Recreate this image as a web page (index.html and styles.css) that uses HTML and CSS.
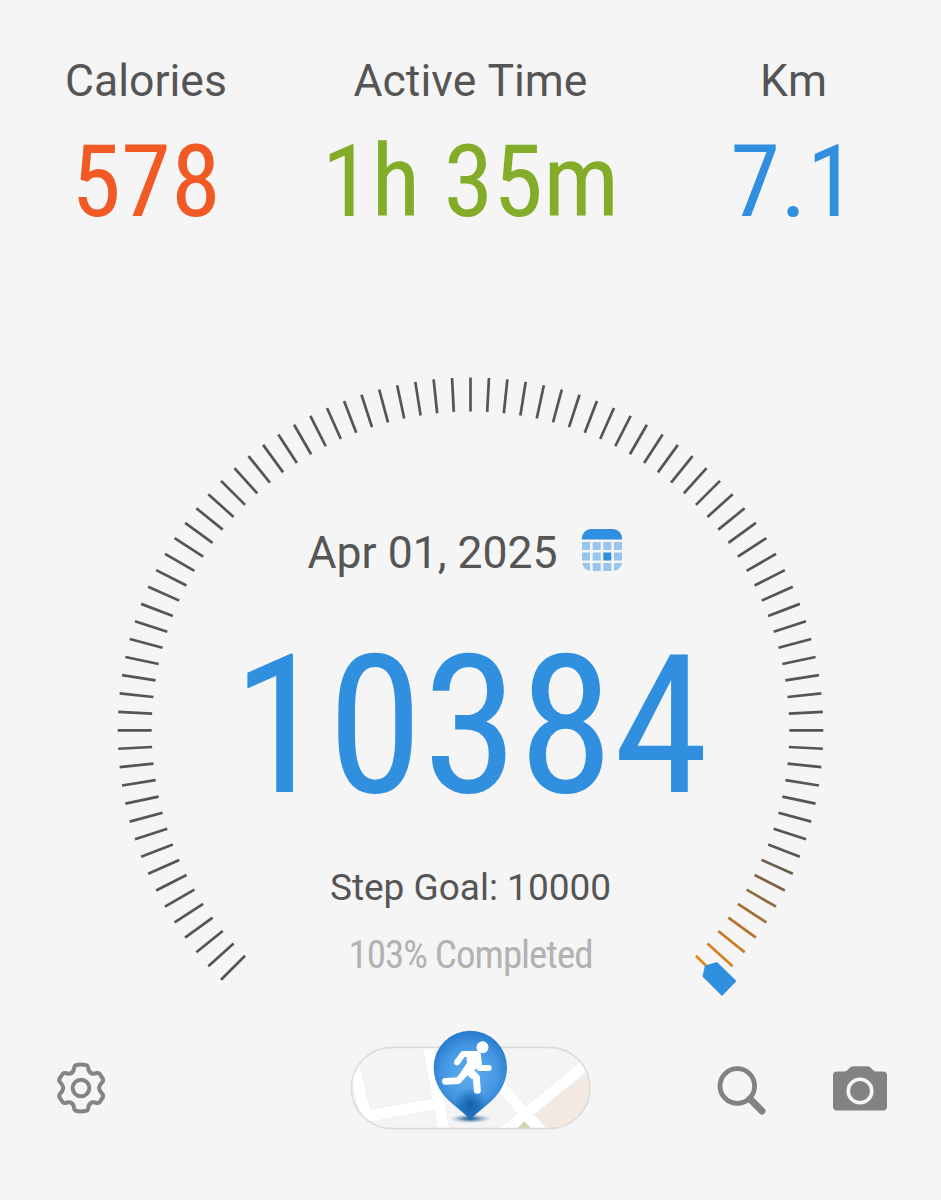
FILE: index.html
```html
<!doctype html>
<html lang="en">

<head>
    <meta charset="utf-8" />
    <meta name="viewport" content="width=device-width, initial-scale=1">
    <title>Pedometer</title>
    <link rel="stylesheet" href="styles.css">
</head>

<body>
    <header class="stats">
        <div class="stat">
            <div class="stat-label">Calories</div>
            <div class="stat-value calories">578</div>
        </div>
        <div class="stat">
            <div class="stat-label">Active Time</div>
            <div class="stat-value time">1h 35m</div>
        </div>
        <div class="stat">
            <div class="stat-label">Km</div>
            <div class="stat-value distance">7.1</div>
        </div>
    </header>

    <main class="gauge">
        <svg class="dial" viewBox="0 0 741 650" aria-hidden="true">
            <g id="ticks"></g>
            <path class="pointer" d="M602.5 616.5 L605 605.5 L617 602 L636.5 621 L622 636 Z" />
        </svg>
        <div class="readout">
            <div class="date">
                <span>Apr 01, 2025</span>
                <svg class="calendar" viewBox="0 0 40 42" aria-label="Calendar">
                    <clipPath id="calendarShape">
                        <rect width="40" height="42" rx="9" />
                    </clipPath>
                    <g clip-path="url(#calendarShape)">
                        <rect width="40" height="10.5" fill="#318fdf" />
                        <g fill="#98c4ed">
                            <path d="M0 13h8v8H0zM10.7 13h8v8h-8zM21.3 13h8v8h-8zM32 13h8v8h-8z" />
                            <path d="M0 23.5h8v8H0zM10.7 23.5h8v8h-8zM32 23.5h8v8h-8z" />
                            <path d="M0 34h8v8H0zM10.7 34h8v8h-8zM21.3 34h8v8h-8zM32 34h8v8h-8z" />
                        </g>
                        <path d="M21.3 23.5h8v8h-8z" fill="#318fdf" />
                    </g>
                </svg>
            </div>
            <div class="steps">10384</div>
            <div class="goal">Step Goal: 10000</div>
            <div class="completed">103% Completed</div>
        </div>
    </main>

    <footer class="toolbar">
        <svg class="icon-settings" viewBox="48 38 150 156" aria-label="Settings">
            <g fill="none" stroke="#848484" stroke-width="12" stroke-linejoin="round">
                <path d="M106 48 Q123 43 141 48 Q145 52 146 62 Q150 74 163 73 L171 71 Q177 70 180 75 L188 87 Q191 93 188 97 Q178 107 177 116 Q178 125 188 135 Q191 139 188 145 L180 157 Q177 162 171 161 L163 159 Q150 158 146 170 Q145 180 141 184 Q123 189 106 184 Q102 180 101 170 Q97 158 84 159 L76 161 Q70 162 67 157 L59 145 Q56 139 59 135 Q69 125 70 116 Q69 107 59 97 Q56 93 59 87 L67 75 Q70 70 76 71 L84 73 Q97 74 101 62 Q102 52 106 48 Z" />
                <circle cx="123" cy="116" r="25" />
            </g>
        </svg>

        <svg class="map" viewBox="0 0 780 360" aria-label="Workout map">
            <defs>
                <clipPath id="mapShape">
                    <rect x="34" y="82" width="716" height="244" rx="122" />
                </clipPath>
                <radialGradient id="pinFill" gradientUnits="userSpaceOnUse" cx="391" cy="160" r="145">
                    <stop offset="0" stop-color="#62b0f3" />
                    <stop offset=".55" stop-color="#4798e3" />
                    <stop offset=".88" stop-color="#2679cc" />
                    <stop offset="1" stop-color="#1f70c2" />
                </radialGradient>
                <radialGradient id="pinShade" gradientUnits="userSpaceOnUse" cx="391" cy="252" r="50">
                    <stop offset="0" stop-color="#05509a" stop-opacity=".8" />
                    <stop offset="1" stop-color="#05509a" stop-opacity="0" />
                </radialGradient>
                <radialGradient id="groundShadow">
                    <stop offset="0" stop-color="#174d7c" />
                    <stop offset=".4" stop-color="#4c7ca6" stop-opacity=".75" />
                    <stop offset="1" stop-color="#9fbad2" stop-opacity="0" />
                </radialGradient>
            </defs>
            <g clip-path="url(#mapShape)">
                <rect x="30" y="78" width="724" height="252" fill="#f4f4f4" />
                <path d="M580 282 L760 146 V330 H628 Z" fill="#f2e9e3" />
                <g fill="none" stroke="#e9e9e9" stroke-width="37">
                    <path d="M36 110 L78 290 L280 252 M264 70 L312 336 M430 140 L618 350 M474 350 L740 132" />
                </g>
                <g fill="none" stroke="#fff" stroke-width="34">
                    <path d="M36 110 L78 290 L280 252 M264 70 L312 336 M430 140 L618 350 M474 350 L740 132" />
                </g>
                <path d="M532 326 L552 304 L574 326 Z" fill="#c9d8ac" />
            </g>
            <rect x="34" y="82" width="716" height="244" rx="122" fill="none" stroke="#dcdcdc" stroke-width="5" />
            <ellipse cx="391" cy="296" rx="64" ry="14" fill="url(#groundShadow)" />
            <path d="M391 302 C382 286 360 271 338 252 C306 226 281 190 281 142 A110 110 0 0 1 501 142 C501 190 476 226 444 252 C422 271 400 286 391 302 Z" fill="url(#pinFill)" />
            <path d="M391 302 C382 286 360 271 338 252 C306 226 281 190 281 142 A110 110 0 0 1 501 142 C501 190 476 226 444 252 C422 271 400 286 391 302 Z" fill="url(#pinShade)" />
            <circle cx="427.5" cy="82" r="18" fill="#fff" />
            <g fill="none" stroke="#fff" stroke-linecap="round" stroke-linejoin="round">
                <path d="M351 127 L369 102 L409 102" stroke-width="18" />
                <path d="M412 106 L418 144 L446 144" stroke-width="18" />
                <path d="M386 147 L354 182 L316 184" stroke-width="20" />
                <path d="M386 148 L409 172 L412 211" stroke-width="21" />
            </g>
            <path d="M378 95 H416 Q423 97 423 105 L425 132 L399 154 L408 166 L396 178 L374 158 L362 172 L353 172 L381 128 Z" fill="#fff" />
        </svg>

        <svg class="icon-search" viewBox="0 0 50 50" aria-label="Search">
            <g fill="none" stroke="#828282">
                <circle cx="20.3" cy="20" r="17.3" stroke-width="4.8" />
                <path d="M33 33 L45 45" stroke-width="7" stroke-linecap="round" />
            </g>
        </svg>

        <svg class="icon-camera" viewBox="0 0 54 45" aria-label="Camera">
            <path d="M4 5.5 H11 Q13 5.5 14.5 4 L17 1.5 Q18.5 .3 20.5 .3 H34 Q36 .3 37.5 1.5 L40 4 Q41.5 5.5 43.5 5.5 H50 Q54 5.5 54 9.5 V40.5 Q54 44.5 50 44.5 H4 Q0 44.5 0 40.5 V9.5 Q0 5.5 4 5.5 Z" fill="#828282" />
            <circle cx="27" cy="25" r="11.8" fill="none" stroke="#f5f5f5" stroke-width="3.6" />
        </svg>
    </footer>

    <script>
        // dial goes from -135 to 135 degrees, one tick every 3 degrees
        let ticks = document.getElementById('ticks');
        let from = [85, 85, 85];
        let to = [232, 134, 22];

        for (let angle = -135; angle <= 135; angle += 3) {
            // last ticks fade from grey to orange
            let t = Math.min(1, Math.max(0, (angle - 110) / 25));
            let color = from.map((c, i) => Math.round(c + (to[i] - c) * t));
            let tick = document.createElementNS('http://www.w3.org/2000/svg', 'line');
            tick.setAttribute('x1', 370.5);
            tick.setAttribute('x2', 370.5);
            tick.setAttribute('y1', 17.5);
            tick.setAttribute('y2', 51.5);
            tick.setAttribute('stroke', `rgb(${color.join(',')})`);
            tick.setAttribute('transform', `rotate(${angle} 370.5 370.3)`);
            ticks.appendChild(tick);
        }
    </script>
</body>

</html>
```
FILE: styles.css
```css
body {
    margin: 0;
    width: 941px;
    height: 1200px;
    overflow: hidden;
    background-color: #f5f5f5;
    color: #555;
    font-family: Roboto, sans-serif;
    font-kerning: none;
}

.stats {
    display: grid;
    grid-template-columns: 292px 357px 289px;
    height: 360px;
    padding-top: 51px;
    box-sizing: border-box;
    text-align: center;
}

.stat-label {
    font-size: 44.5px;
    line-height: 60px;
}

.stat-value {
    margin-top: 11px;
    font-family: "Roboto Condensed", Roboto, sans-serif;
    font-stretch: 75%;
    font-size: 101px;
    line-height: 120px;
    white-space: nowrap;
}

.calories {
    color: #f15a24;
}

.time {
    color: #83ad29;
}

.distance {
    color: #318fdf;
}

.gauge {
    display: grid;
    justify-content: center;
    height: 650px;
}

.dial,
.readout {
    grid-area: 1 / 1;
}

.dial {
    width: 741px;
    height: 650px;
}

.dial line {
    stroke-width: 2.7px;
}

.pointer {
    fill: #318fdf;
}

.readout {
    display: flex;
    flex-direction: column;
    align-items: center;
    padding-top: 163px;
    white-space: nowrap;
}

.date {
    display: flex;
    gap: 24px;
    margin-right: 12px;
    font-size: 44.5px;
    line-height: 60px;
}

.calendar {
    width: 40px;
    height: 42px;
    margin-top: 6px;
}

.steps {
    margin-top: 43px;
    font-family: "Roboto Condensed", Roboto, sans-serif;
    font-stretch: 75%;
    font-size: 193px;
    line-height: 200px;
    color: #318fdf;
}

.goal {
    margin-top: 37px;
    font-size: 37px;
    line-height: 50px;
}

.completed {
    margin-top: 17px;
    font-family: "Roboto Condensed", Roboto, sans-serif;
    font-stretch: 75%;
    font-size: 39px;
    line-height: 50px;
    letter-spacing: -1px;
    color: #b2b2b2;
}

.toolbar {
    display: flex;
    align-items: flex-start;
    padding: 10px 54px 0 56px;
}

.icon-settings {
    width: 50px;
    height: 52px;
    margin-top: 42px;
}

.map {
    width: 260px;
    height: 120px;
    margin-left: 234px;
}

.icon-search {
    width: 50px;
    height: 50px;
    margin: 46px 0 0 117px;
}

.icon-camera {
    width: 54px;
    height: 45px;
    margin: 46px 0 0 66px;
}
```
